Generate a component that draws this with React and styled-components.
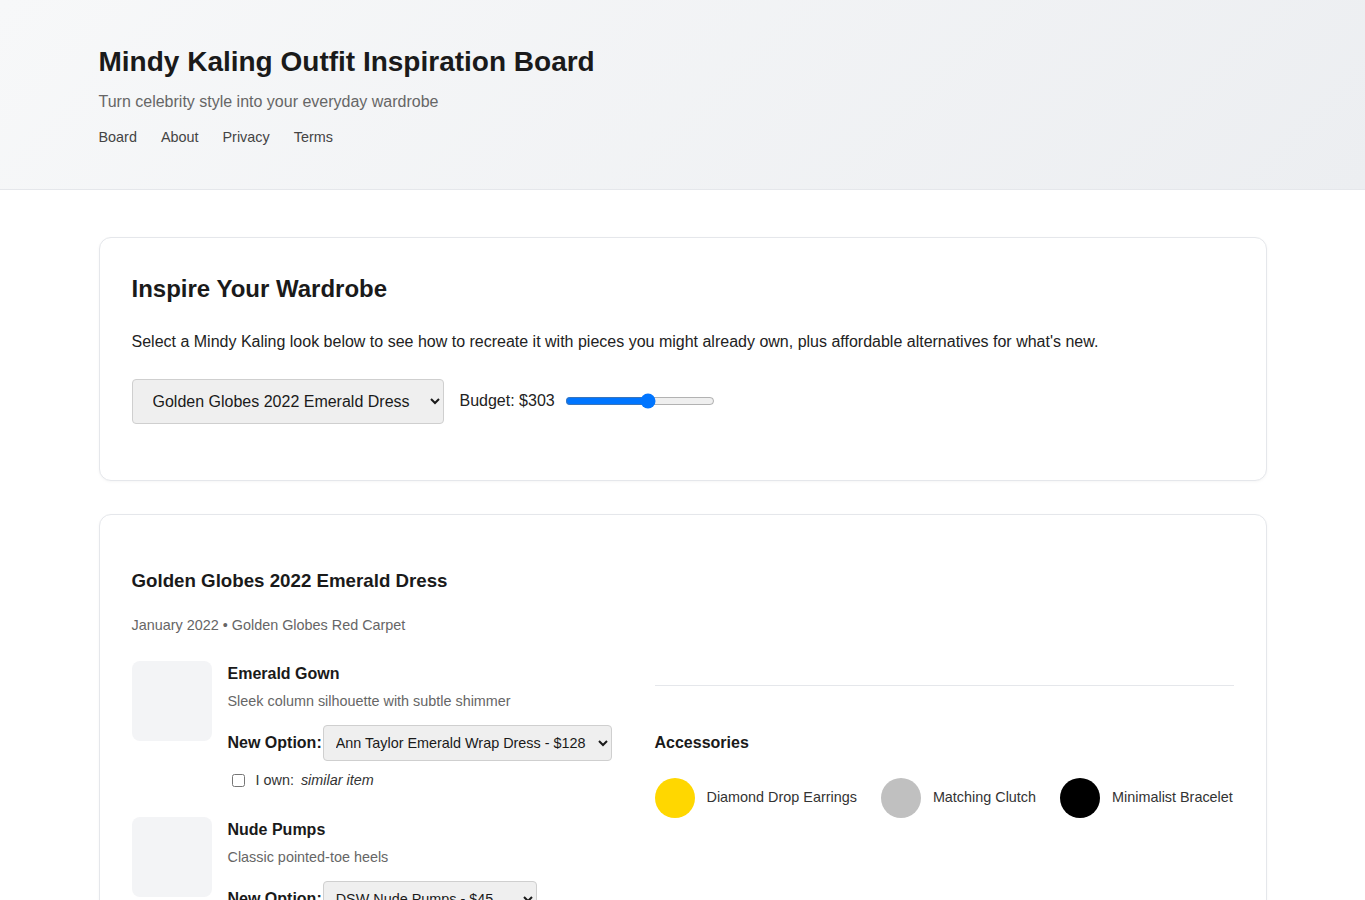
import React, { useState } from 'react'
import styled, { createGlobalStyle } from 'styled-components'

const GlobalStyle = createGlobalStyle`
    body {
        margin: 0;
        font-family: "Liberation Sans", Arial, sans-serif;
        color: #1a1a1a;
        background: #fff;
        line-height: 1.5;
    }
    * { box-sizing: border-box; }
`

const pieces = [
    {
        name: 'Emerald Gown',
        desc: 'Sleek column silhouette with subtle shimmer',
        options: ['Ann Taylor Emerald Wrap Dress - $128', 'Zara Satin Midi Dress - $69'],
    },
    {
        name: 'Nude Pumps',
        desc: 'Classic pointed-toe heels',
        options: ['DSW Nude Pumps - $45', 'Sam Edelman Hazel - $120'],
    },
]

const accessories = [
    { name: 'Diamond Drop Earrings', color: '#ffd700' },
    { name: 'Matching Clutch', color: '#c0c0c0' },
    { name: 'Minimalist Bracelet', color: '#000000' },
]

const App = () => {
    const [budget, setBudget] = useState(303)

    return (
        <>
            <GlobalStyle />
            <Header>
                <Container>
                    <Title>Mindy Kaling Outfit Inspiration Board</Title>
                    <Subtitle>Turn celebrity style into your everyday wardrobe</Subtitle>
                    <Nav>
                        <NavLink href="#">Board</NavLink>
                        <NavLink href="#">About</NavLink>
                        <NavLink href="#">Privacy</NavLink>
                        <NavLink href="#">Terms</NavLink>
                    </Nav>
                </Container>
            </Header>
            <Main>
                <Card>
                    <CardTitle>Inspire Your Wardrobe</CardTitle>
                    <Intro>
                        Select a Mindy Kaling look below to see how to recreate it with pieces you might already own, plus affordable alternatives for what's new.
                    </Intro>
                    <Controls>
                        <LookSelect defaultValue="gg">
                            <option value="gg">Golden Globes 2022 Emerald Dress</option>
                            <option value="met">Met Gala 2019 Gold Gown</option>
                        </LookSelect>
                        <BudgetLabel>Budget: ${budget}</BudgetLabel>
                        <Range
                            type="range"
                            min="50"
                            max="500"
                            value={budget}
                            onChange={e => setBudget(e.target.value)}
                        />
                    </Controls>
                </Card>

                <LookCard>
                    <LookTitle>Golden Globes 2022 Emerald Dress</LookTitle>
                    <Meta>January 2022 • Golden Globes Red Carpet</Meta>
                    <Grid>
                        <div>
                            {pieces.map(p => (
                                <Piece key={p.name}>
                                    <Thumb />
                                    <PieceBody>
                                        <PieceName>{p.name}</PieceName>
                                        <PieceDesc>{p.desc}</PieceDesc>
                                        <OptionRow>
                                            <OptionLabel>New Option:</OptionLabel>
                                            <OptionSelect>
                                                {p.options.map(o => <option key={o}>{o}</option>)}
                                            </OptionSelect>
                                        </OptionRow>
                                        <OwnRow>
                                            <input type="checkbox" />
                                            <span>I own:</span>
                                            <em>similar item</em>
                                        </OwnRow>
                                    </PieceBody>
                                </Piece>
                            ))}
                        </div>
                        <RightCol>
                            <Divider />
                            <SectionTitle>Accessories</SectionTitle>
                            <AccList>
                                {accessories.map(a => (
                                    <Acc key={a.name}>
                                        <Swatch color={a.color} />
                                        <span>{a.name}</span>
                                    </Acc>
                                ))}
                            </AccList>
                        </RightCol>
                    </Grid>
                </LookCard>
            </Main>
        </>
    )
}

export default App

const Header = styled.header`
    background: linear-gradient(135deg, #f7f8f9 0%, #eceef1 100%);
    border-bottom: 1px solid #e5e7eb;
    padding: 41px 0 40px;
`

const Container = styled.div`
    max-width: 1168px;
    margin: 0 auto;
`

const Title = styled.h1`
    margin: 0;
    font-size: 28px;
    line-height: 42px;
    font-weight: 700;
    color: #1a1a1a;
`

const Subtitle = styled.p`
    margin: 7px 0 0;
    font-size: 16px;
    line-height: 24px;
    color: #666;
`

const Nav = styled.nav`
    display: flex;
    gap: 24px;
    margin-top: 13px;
`

const NavLink = styled.a`
    font-size: 14.4px;
    line-height: 21.6px;
    color: #444;
    text-decoration: none;
`

const Main = styled.main`
    max-width: 1168px;
    margin: 47px auto 0;
    padding-bottom: 48px;
`

const Card = styled.section`
    border: 1px solid #e5e7eb;
    border-radius: 12px;
    padding: 32px;
    background: #fff;
    box-shadow: 0 1px 3px rgba(0, 0, 0, 0.04);
`

const CardTitle = styled.h2`
    margin: 1px 0 0;
    font-size: 24px;
    line-height: 36px;
    font-weight: 700;
`

const Intro = styled.p`
    margin: 23px 0 0;
    font-size: 16px;
    line-height: 24px;
    color: #222;
`

const Controls = styled.div`
    display: flex;
    align-items: center;
    margin-top: 25px;
    margin-bottom: 24px;
`

const LookSelect = styled.select`
    height: 45px;
    padding: 0 16px 0 16px;
    font-family: inherit;
    font-size: 16px;
    color: #1a1a1a;
    background: #efefef;
    border: 1px solid #cfcfcf;
    border-radius: 4px;
`

const BudgetLabel = styled.span`
    margin-left: 16px;
    font-size: 16px;
    color: #222;
`

const Range = styled.input`
    width: 150px;
    margin: 0 0 0 10px;
    accent-color: #0075ff;
`

const LookCard = styled(Card)`
    margin-top: 33px;
`

const LookTitle = styled.h3`
    margin: 20px 0 0;
    font-size: 18.72px;
    line-height: 28px;
    font-weight: 700;
`

const Meta = styled.p`
    margin: 20px 0 0;
    font-size: 14.4px;
    line-height: 21.6px;
    color: #666;
`

const Grid = styled.div`
    display: grid;
    grid-template-columns: 483px 1fr;
    gap: 40px;
    margin-top: 25px;
`

const Piece = styled.div`
    display: flex;
    gap: 16px;
    margin-bottom: 26px;
`

const Thumb = styled.div`
    flex: 0 0 80px;
    height: 80px;
    border-radius: 8px;
    background: #f3f4f6;
`

const PieceBody = styled.div`
    display: flex;
    flex-direction: column;
    align-items: flex-start;
`

const PieceName = styled.div`
    margin-top: 1px;
    font-size: 16px;
    line-height: 24px;
    font-weight: 700;
`

const PieceDesc = styled.div`
    margin-top: 5px;
    font-size: 14.4px;
    line-height: 21.6px;
    color: #666;
`

const OptionRow = styled.div`
    display: flex;
    align-items: center;
    gap: 1px;
    margin-top: 12px;
    white-space: nowrap;
`

const OptionLabel = styled.span`
    font-size: 16px;
    font-weight: 700;
`

const OptionSelect = styled.select`
    flex-shrink: 0;
    height: 36px;
    padding: 0 8px 0 8px;
    font-family: inherit;
    font-size: 14.4px;
    color: #1a1a1a;
    background: #efefef;
    border: 1px solid #cfcfcf;
    border-radius: 4px;
`

const OwnRow = styled.label`
    display: flex;
    align-items: center;
    gap: 7px;
    margin-top: 9px;
    font-size: 14.4px;
    line-height: 21.6px;
    color: #333;
    white-space: nowrap;

    input {
        margin: 0 4px 0 4px;
    }
    em {
        font-style: italic;
    }
`

const RightCol = styled.div`
    padding-top: 24px;
`

const Divider = styled.hr`
    margin: 0;
    border: none;
    border-top: 1px solid #e5e7eb;
`

const SectionTitle = styled.h4`
    margin: 45px 0 0;
    font-size: 16px;
    line-height: 24px;
    font-weight: 700;
`

const AccList = styled.div`
    display: flex;
    gap: 24px;
    margin-top: 23px;
`

const Acc = styled.div`
    display: flex;
    align-items: center;
    gap: 12px;
    font-size: 14.4px;
    color: #333;
    white-space: nowrap;
`

const Swatch = styled.span`
    flex-shrink: 0;
    width: 40px;
    height: 40px;
    border-radius: 50%;
    background: ${p => p.color};
`
